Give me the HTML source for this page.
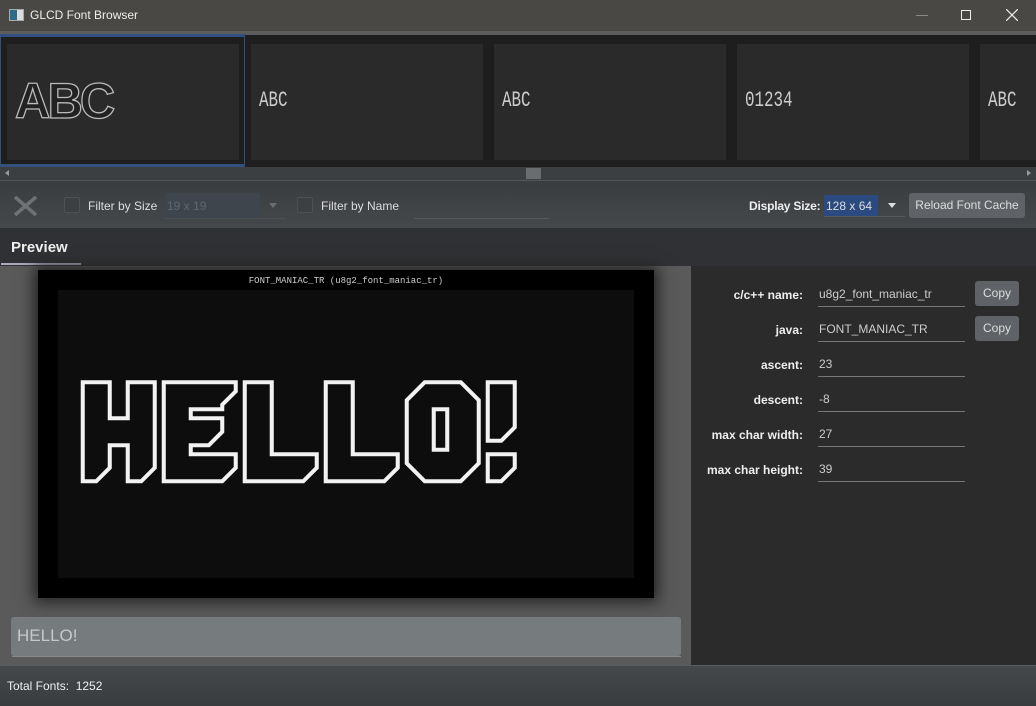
<!DOCTYPE html>
<html><head><meta charset="utf-8"><style>
*{margin:0;padding:0;box-sizing:border-box}
body{width:1036px;height:706px;overflow:hidden;background:#2b2b2b;font-family:"Liberation Sans",sans-serif;position:relative;color:#ddd}
.a{position:absolute}
.tile{position:absolute;top:44px;height:116px;width:232px;background:#2a2a2a;overflow:hidden}
.tile span{position:absolute;left:8px;top:46px;font-family:"Liberation Mono",monospace;color:#ccc;font-size:22px;line-height:22px;transform:scaleX(0.72);transform-origin:0 0;letter-spacing:0}
.lbl{position:absolute;right:233px;font-size:12px;font-weight:bold;color:#eee;text-align:right}
.val{position:absolute;left:818px;width:147px;font-size:12px;color:#ccc;border-bottom:1px solid #777;height:24px;line-height:22px;padding-left:1px}
.btn{position:absolute;background:#5f6266;border-radius:3px;color:#ddd;font-size:12px;text-align:center}
.cb{position:absolute;width:16px;height:16px;border:1px solid #4d5154;border-radius:2px;background:#3d4043}
</style></head><body>
<div class="a" style="left:0;top:0;width:1036px;height:31px;background:#4a4845"></div>
<div class="a" style="left:9px;top:9px;width:15px;height:12px;background:#ddd;border:1px solid #aaa"><div style="width:7px;height:10px;background:#2e6b8a"></div></div>
<div class="a" style="left:30px;top:8px;font-size:12px;color:#eee">GLCD Font Browser</div>
<div class="a" style="left:916px;top:15px;width:12px;height:1px;background:#888"></div>
<div class="a" style="left:961px;top:10px;width:10px;height:10px;border:1px solid #eee"></div>
<svg class="a" style="left:1006px;top:9px" width="12" height="12"><path d="M0 0L12 12M12 0L0 12" stroke="#eee" stroke-width="1.2"/></svg>
<div class="a" style="left:0;top:31px;width:1036px;height:4px;background:#5c5c5c"></div>
<div class="a" style="left:0;top:35px;width:1036px;height:132px;background:#1e1e1e"></div>
<div class="a" style="left:0;top:34px;width:245px;height:133px;border:1px solid #34507f;border-width:3px 1px 3px 1px"></div>
<div class="tile" style="left:7px"><span style="left:8px;top:32px;font-family:'Liberation Sans',sans-serif;font-size:50px;line-height:50px;font-weight:bold;color:#222;-webkit-text-stroke:1.3px #bbb;transform:scaleX(0.98);letter-spacing:-3px">ABC</span></div>
<div class="tile" style="left:251px"><span>ABC</span></div>
<div class="tile" style="left:494px"><span>ABC</span></div>
<div class="tile" style="left:737px"><span>01234</span></div>
<div class="tile" style="left:980px"><span>ABC</span></div>
<div class="a" style="left:0;top:167px;width:1036px;height:13px;background:#3c3f42"></div>
<div class="a" style="left:526px;top:168px;width:15px;height:11px;background:#6a6d70"></div>
<div class="a" style="left:5px;top:170px;width:0;height:0;border:3.5px solid transparent;border-right:4px solid #999;border-left:0"></div>
<div class="a" style="left:1027px;top:170px;width:0;height:0;border:3.5px solid transparent;border-left:4px solid #999;border-right:0"></div>
<div class="a" style="left:0;top:180px;width:1036px;height:48px;background:linear-gradient(#3a3d40,#45484b);border-top:1px solid #555"></div>
<svg class="a" style="left:14px;top:196px" width="23" height="20"><path d="M1 1L22 19M22 1L1 19" stroke="#6f7174" stroke-width="3.5"/></svg>
<div class="cb" style="left:64px;top:197px"></div>
<div class="a" style="left:88px;top:199px;font-size:12px;color:#ddd">Filter by Size</div>
<div class="a" style="left:165px;top:193px;width:95px;height:25px;background:#3f454c;color:#5e6670;font-size:12px;padding:6px 2px">19 x 19</div>
<div class="a" style="left:165px;top:218px;width:121px;height:1px;background:#4c5054"></div>
<div class="a" style="left:269px;top:203px;border:4px solid transparent;border-top:5px solid #6a6d70"></div>
<div class="cb" style="left:297px;top:197px"></div>
<div class="a" style="left:321px;top:199px;font-size:12px;color:#ddd">Filter by Name</div>
<div class="a" style="left:414px;top:218px;width:135px;height:1px;background:#55595d"></div>
<div class="a" style="left:749px;top:199px;font-size:12px;font-weight:bold;color:#eee;letter-spacing:-0.2px">Display Size:</div>
<div class="a" style="left:824px;top:195px;width:54px;height:21px;background:#2b4a80;color:#ddd;font-size:12px;padding:4px 2px">128 x 64</div>
<div class="a" style="left:824px;top:216px;width:81px;height:1px;background:#55595d"></div>
<div class="a" style="left:888px;top:203px;border:4px solid transparent;border-top:5px solid #ddd"></div>
<div class="btn" style="left:909px;top:193px;width:116px;height:25px;line-height:25px">Reload Font Cache</div>
<div class="a" style="left:0;top:228px;width:1036px;height:38px;background:#2f3134"></div>
<div class="a" style="left:11px;top:239px;font-size:15px;font-weight:bold;color:#eee">Preview</div>
<div class="a" style="left:1px;top:263px;width:80px;height:2px;background:#aab"></div>
<div class="a" style="left:0;top:266px;width:691px;height:399px;background:#5a5a5a"></div>
<div class="a" style="left:38px;top:270px;width:616px;height:328px;background:#000;box-shadow:0 0 14px 4px #222"></div>
<div class="a" style="left:58px;top:290px;width:576px;height:288px;background:#0d0d0d"></div>
<div class="a" style="left:38px;top:276px;width:616px;text-align:center;font-family:'Liberation Mono',monospace;font-size:9px;color:#ccc">FONT_MANIAC_TR (u8g2_font_maniac_tr)</div>
<svg class="a" style="left:58px;top:290px" width="576" height="288" viewBox="0 0 128 64"><g fill="none" stroke="#f2f2f2" stroke-width="0.9" stroke-linejoin="miter">
<path d="M5.5 20.5H11.5V28.5H15.5V20.5H21.5V39.5L18.5 42.5H15.5V34.5H11.5V39.5L8.5 42.5H5.5Z"/>
<path d="M23.5 20.5H39.5V22.5L36.5 25.5V26.5H29.5V28.5H36.5V31.5L33.5 34.5H29.5V36.5H39.5V39.5L36.5 42.5H23.5Z"/>
<path d="M41.5 20.5H47.5V36.5H57.5V39.5L54.5 42.5H41.5Z"/>
<path d="M59.5 20.5H65.5V36.5H75.5V39.5L72.5 42.5H59.5Z"/>
<path d="M81.5 20.5H89.5L93.5 24.5V38.5L89.5 42.5H81.5L77.5 38.5V24.5Z"/>
<path d="M83.5 26.5H86.5V35.5H83.5Z"/>
<path d="M95.5 20.5H101.5V30.5L98.5 33.5H95.5Z"/>
<path d="M95.5 36.5H101.5V39.5L98.5 42.5H95.5Z"/>
</g></svg>
<div class="a" style="left:11px;top:617px;width:670px;height:39px;background:#767b7e;border-radius:3px;color:#c8c8c8;font-size:17px;padding:9px 6px">HELLO!</div>
<div class="a" style="left:12px;top:656px;width:669px;height:1px;background:#888"></div>
<div class="lbl" style="top:288px">c/c++ name:</div>
<div class="val" style="top:283px">u8g2_font_maniac_tr</div>
<div class="btn" style="left:975px;top:281px;width:44px;height:25px;line-height:25px">Copy</div>
<div class="lbl" style="top:323px">java:</div>
<div class="val" style="top:318px">FONT_MANIAC_TR</div>
<div class="btn" style="left:975px;top:316px;width:44px;height:25px;line-height:25px">Copy</div>
<div class="lbl" style="top:358px">ascent:</div>
<div class="val" style="top:353px">23</div>
<div class="lbl" style="top:393px">descent:</div>
<div class="val" style="top:388px">-8</div>
<div class="lbl" style="top:428px">max char width:</div>
<div class="val" style="top:423px">27</div>
<div class="lbl" style="top:463px">max char height:</div>
<div class="val" style="top:458px">39</div>
<div class="a" style="left:0;top:665px;width:1036px;height:41px;background:linear-gradient(#46494c,#393c3f);border-top:1px solid #5a5d60"></div>
<div class="a" style="left:7px;top:679px;font-size:12px;color:#eee">Total Fonts:&nbsp; 1252</div>
</body></html>
